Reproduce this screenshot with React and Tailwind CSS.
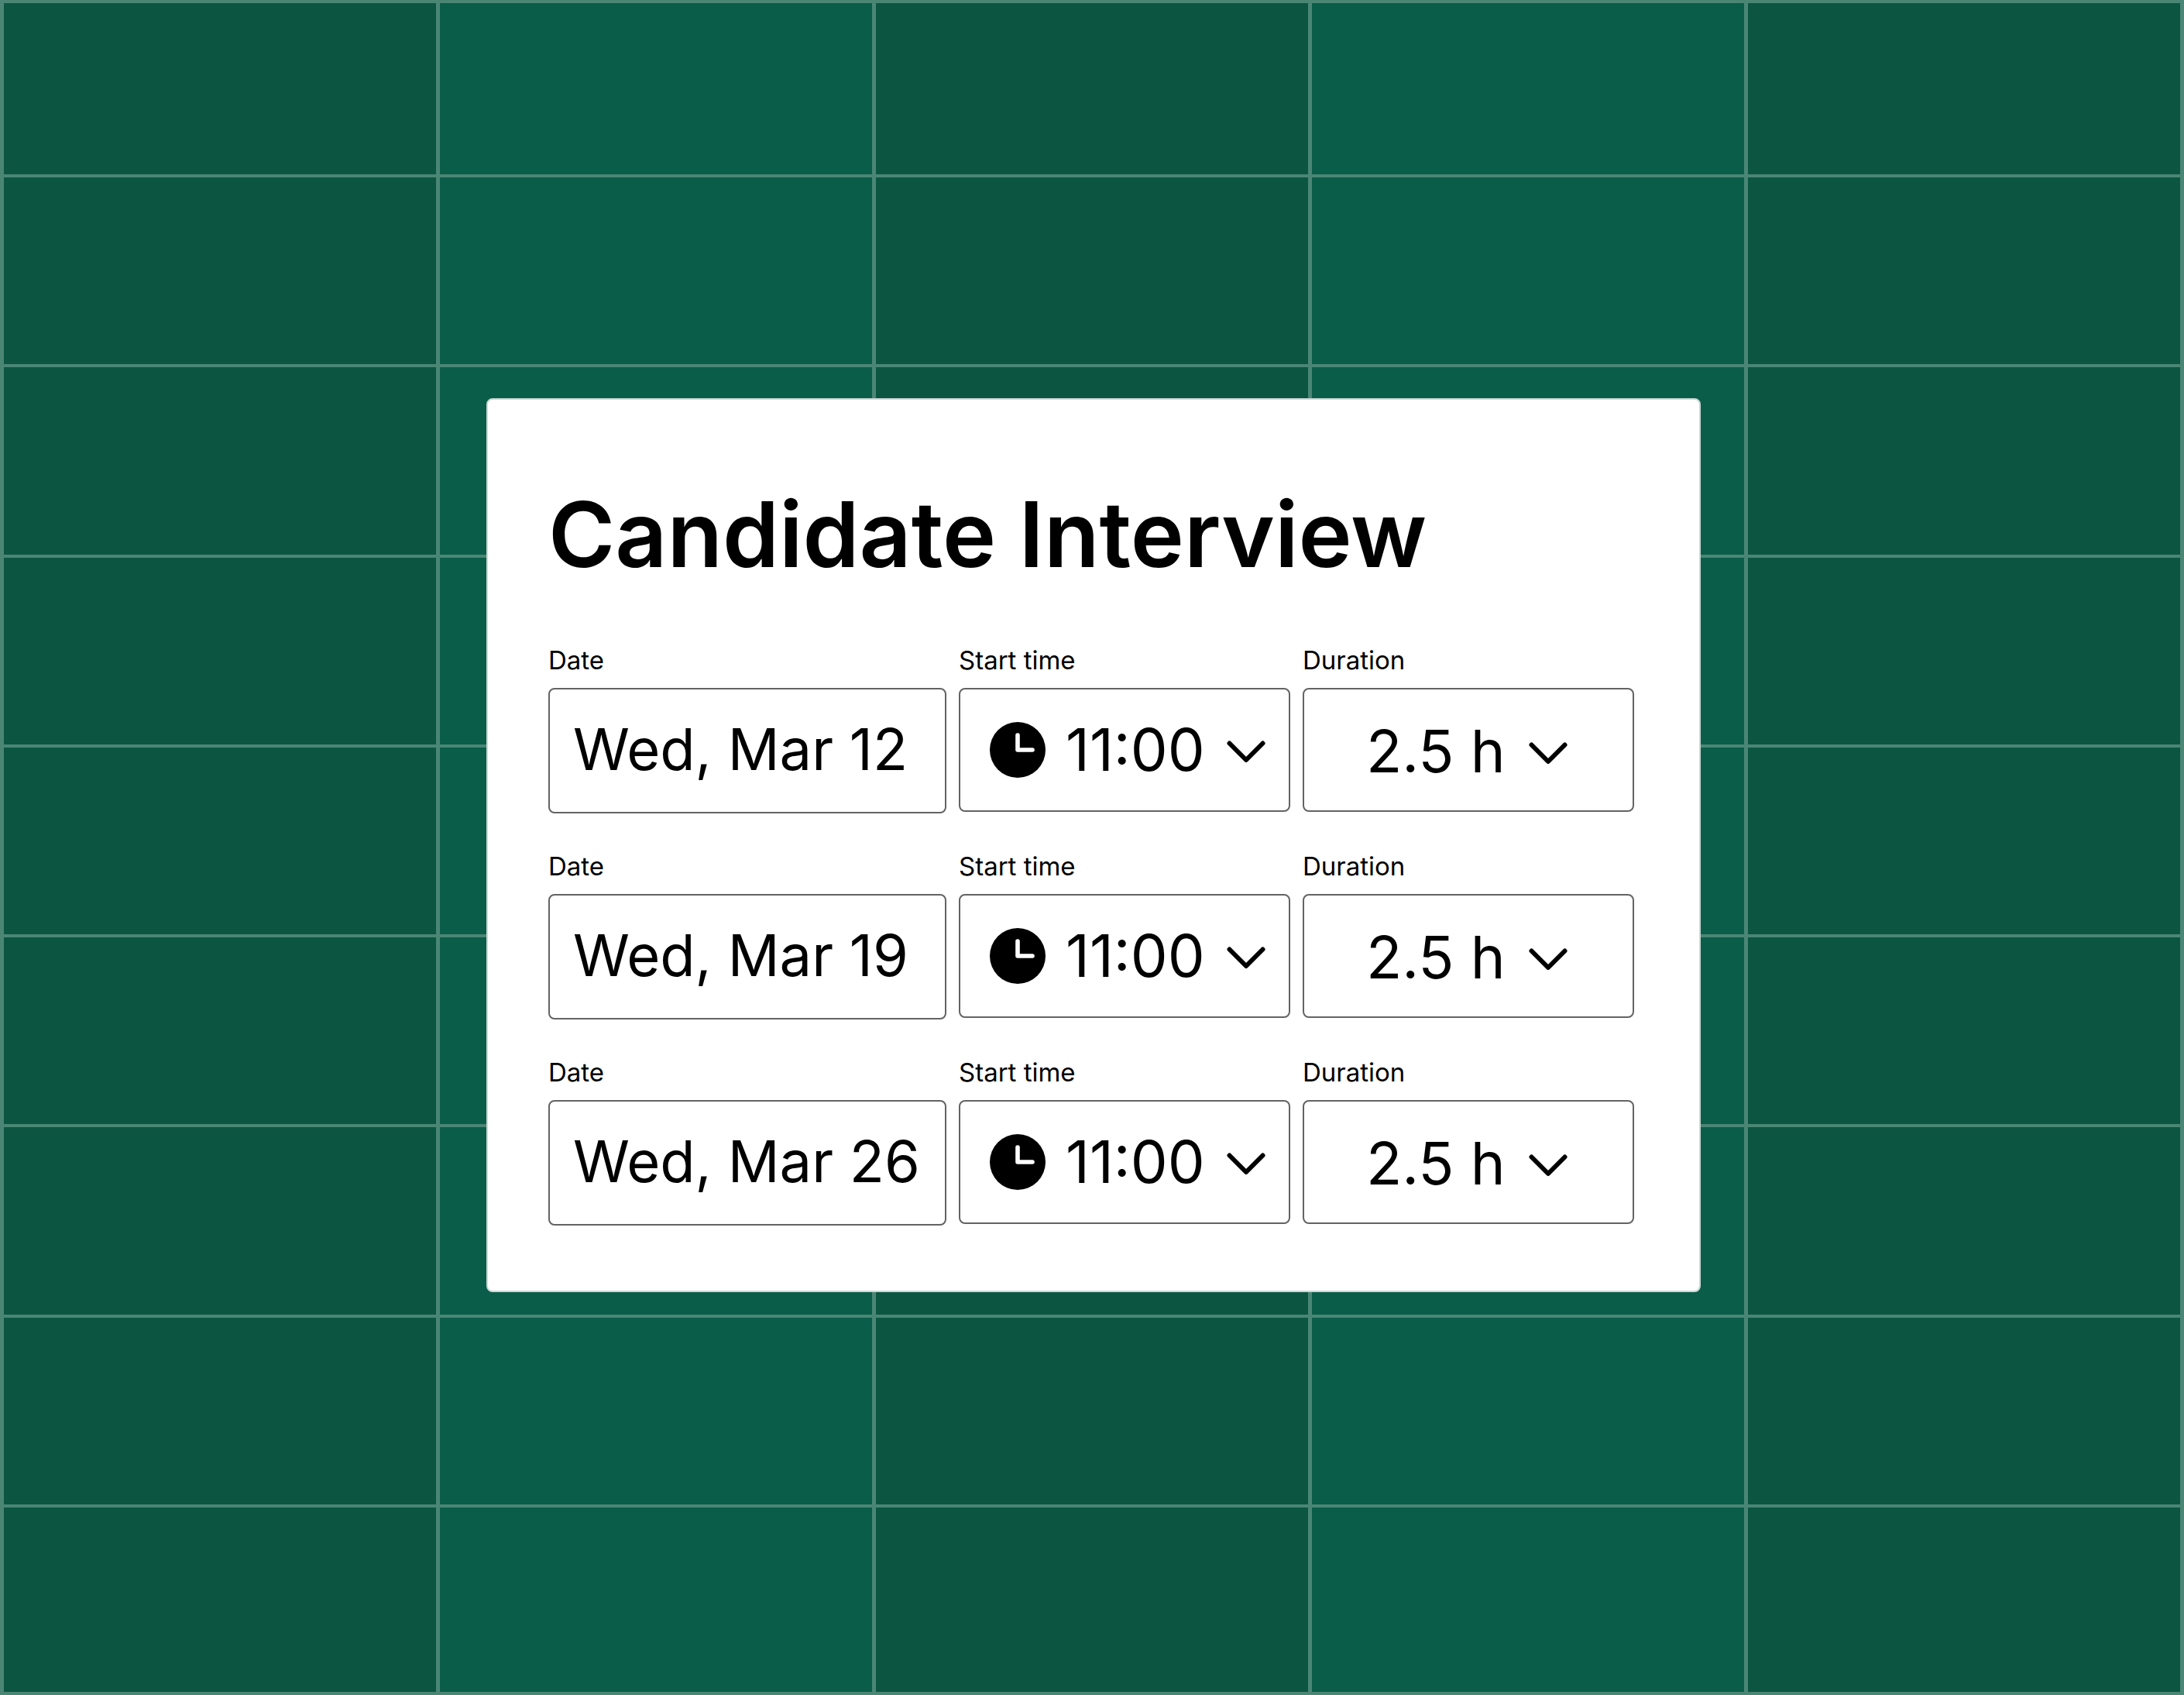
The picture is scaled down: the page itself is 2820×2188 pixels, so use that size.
import React, { useState } from "react";

const START_TIMES = ["09:00", "10:00", "11:00", "12:00", "13:00"];
const DURATIONS = ["1 h", "1.5 h", "2 h", "2.5 h", "3 h"];

const initialSlots = [
  { id: 1, date: "Wed, Mar 12", start: "11:00", duration: "2.5 h" },
  { id: 2, date: "Wed, Mar 19", start: "11:00", duration: "2.5 h" },
  { id: 3, date: "Wed, Mar 26", start: "11:00", duration: "2.5 h" },
];

const COLUMNS = 5;
const ROWS = 9;

function CalendarGrid() {
  return (
    <div
      aria-hidden="true"
      className="absolute inset-0 grid grid-cols-5 grid-rows-[221fr_repeat(7,241fr)_238fr] gap-x-[5px] gap-y-1 border-x-[5px] border-y-4 border-[#4b8675] bg-[#4b8675]"
    >
      {Array.from({ length: COLUMNS * ROWS }, (_, i) => (
        <div
          key={i}
          className={(i % COLUMNS) % 2 === 0 ? "bg-[#0c5641]" : "bg-[#0a5d49]"}
        />
      ))}
    </div>
  );
}

function ClockIcon() {
  return (
    <svg
      viewBox="0 0 72 72"
      aria-hidden="true"
      className="pointer-events-none ml-10 size-18 [grid-area:1/1]"
    >
      <circle cx="36" cy="36" r="36" fill="#000" />
      <path
        d="M36 17V36H55"
        fill="none"
        stroke="#fff"
        strokeWidth="5.6"
        strokeLinecap="round"
        strokeLinejoin="round"
      />
    </svg>
  );
}

function Chevron({ className }) {
  return (
    <svg
      viewBox="0 0 50 29"
      aria-hidden="true"
      className={`pointer-events-none h-[29px] w-[50px] justify-self-end [grid-area:1/1] ${className}`}
    >
      <path
        d="M3.5 3.5L25 25L46.5 3.5"
        fill="none"
        stroke="#000"
        strokeWidth="6"
        strokeLinecap="round"
        strokeLinejoin="round"
      />
    </svg>
  );
}

function Field({ id, label, children }) {
  return (
    <div className="flex min-w-0 flex-col gap-4">
      <label htmlFor={id} className="text-[33px] leading-10">
        {label}
      </label>
      {children}
    </div>
  );
}

function SlotRow({ slot, onChange }) {
  const update = (key) => (e) => onChange(slot.id, key, e.target.value);

  return (
    <div className="grid grid-cols-[514fr_428fr_428fr] gap-4">
      <Field id={`date-${slot.id}`} label="Date">
        <input
          id={`date-${slot.id}`}
          type="text"
          value={slot.date}
          onChange={update("date")}
          className="h-[162px] w-full rounded-lg border-2 border-[#636363] bg-white pr-4 pb-1 pl-[30px] text-[74px]"
        />
      </Field>

      <Field id={`start-${slot.id}`} label="Start time">
        <div className="grid items-center">
          <select
            id={`start-${slot.id}`}
            value={slot.start}
            onChange={update("start")}
            className="h-40 w-full appearance-none rounded-lg border-2 border-[#636363] bg-white pb-0.5 pl-[136px] text-[76px] [grid-area:1/1]"
          >
            {START_TIMES.map((t) => (
              <option key={t}>{t}</option>
            ))}
          </select>
          <ClockIcon />
          <Chevron className="mt-1 mr-8" />
        </div>
      </Field>

      <Field id={`duration-${slot.id}`} label="Duration">
        <div className="grid items-center">
          <select
            id={`duration-${slot.id}`}
            value={slot.duration}
            onChange={update("duration")}
            className="h-40 w-full appearance-none rounded-lg border-2 border-[#636363] bg-white pt-0.5 pl-20 text-[76px] [grid-area:1/1]"
          >
            {DURATIONS.map((d) => (
              <option key={d}>{d}</option>
            ))}
          </select>
          <Chevron className="mt-2 mr-[86px]" />
        </div>
      </Field>
    </div>
  );
}

export default function App() {
  const [slots, setSlots] = useState(initialSlots);

  const handleChange = (id, key, value) => {
    setSlots((prev) =>
      prev.map((s) => (s.id === id ? { ...s, [key]: value } : s))
    );
  };

  return (
    <main className="relative flex min-h-screen items-center justify-center pb-1.5 pl-1 font-['Inter','Liberation_Sans',sans-serif] text-black">
      <CalendarGrid />

      <form className="relative w-full max-w-[1568px] rounded-lg border-2 border-[#cbd8d4] bg-white pt-[102px] pr-[84px] pb-[84px] pl-[78px]">
        <h1 className="text-[117px] leading-[144px] font-semibold">
          Candidate Interview
        </h1>

        <div className="mt-[70px] flex flex-col gap-12">
          {slots.map((slot) => (
            <SlotRow key={slot.id} slot={slot} onChange={handleChange} />
          ))}
        </div>
      </form>
    </main>
  );
}
